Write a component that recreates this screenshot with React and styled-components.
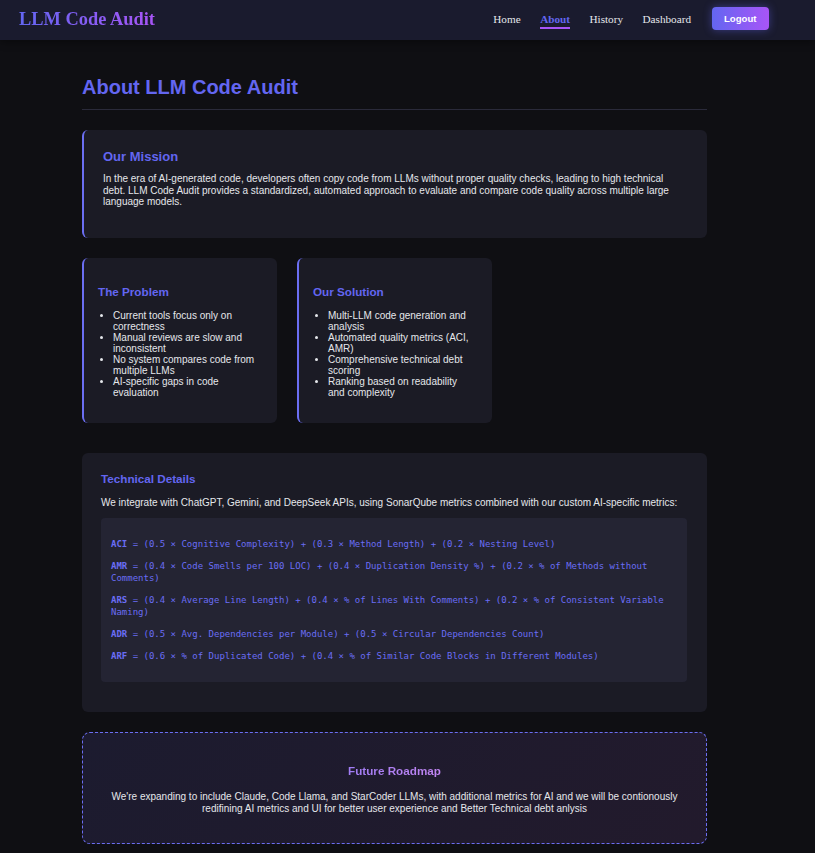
import React from 'react';
import styled, { createGlobalStyle } from 'styled-components';

const GlobalStyle = createGlobalStyle`
    body{
        margin:0;
        background:#0f0f13;
        font-family:"Liberation Sans", Arial, sans-serif;
        color:#e5e7eb;
    }
`

const Nav = styled.nav`
    height:40px;
    display:flex;
    align-items:center;
    justify-content:space-between;
    padding:0 46px 0 19px;
    background:#1a1b2e;
    box-shadow:0 2px 8px rgba(0,0,0,0.4);
`

const Logo = styled.div`
    font-family:"Liberation Serif", "Times New Roman", serif;
    font-weight:bold;
    font-size:18.4px;
    background:linear-gradient(90deg,#6366f1,#a855f7);
    -webkit-background-clip:text;
    background-clip:text;
    color:transparent;
    margin-top:-2px;
`

const NavLinks = styled.div`
    display:flex;
    align-items:center;
    gap:19.5px;
`

const NavLink = styled.a`
    position:relative;
    font-family:"Liberation Serif", "Times New Roman", serif;
    font-size:11.2px;
    color:${p => p.$active ? '#6366f1' : '#e5e7eb'};
    font-weight:${p => p.$active ? 'bold' : 'normal'};
    text-decoration:none;
    margin-top:-2px;

    &::after{
        content:'';
        display:${p => p.$active ? 'block' : 'none'};
        position:absolute;
        left:0;
        right:0;
        bottom:-4px;
        height:2px;
        background:#a855f7;
    }
`

const LogoutButton = styled.button`
    margin-left:1px;
    font-family:"Liberation Sans", Arial, sans-serif;
    font-weight:bold;
    font-size:9.6px;
    color:#fff;
    border:none;
    border-radius:4px;
    padding:6px 12.5px;
    height:23px;
    margin-top:-3px;
    background:linear-gradient(90deg,#6366f1,#a855f7);
    box-shadow:0 0 8px rgba(99,102,241,0.45);
`

const Main = styled.main`
    width:625px;
    margin:0 0 40px 82px;
`

const PageTitle = styled.h1`
    margin:36px 0 20px;
    padding-bottom:10px;
    font-size:20px;
    line-height:23px;
    color:#6366f1;
    border-bottom:1px solid #2a2a3a;
`

const Card = styled.section`
    background:#1b1b25;
    border-radius:6px;
    border-left:${p => p.$accent ? '2px solid #6b6ef2' : 'none'};
    padding:${p => p.$pad};
`

const CardTitle = styled.h3`
    margin:0 0 ${p => p.$gap || '10px'};
    font-size:${p => p.$size || '11.7px'};
    line-height:${p => p.$line || '13.5px'};
    color:#6366f1;
`

const Text = styled.p`
    margin:0 0 10px;
    font-size:10px;
    line-height:11.5px;
    color:#e5e7eb;
`

const Grid = styled.div`
    display:grid;
    grid-template-columns:repeat(3, 1fr);
    gap:20px;
    margin:20px 0 30px;
`

const List = styled.ul`
    margin:0;
    padding-left:15px;
    font-size:10px;
    line-height:11px;
    color:#e5e7eb;
`

const CodeBlock = styled.div`
    background:#242433;
    border-radius:4px;
    padding:10px 8px 10px 10px;
    margin-bottom:10px;
    font-family:"DejaVu Sans Mono", "Liberation Mono", monospace;
    font-size:9px;
    line-height:12px;
    color:#6a6df5;
`

const Formula = styled.p`
    margin:10px 0;
`

const Label = styled.b`
    font-weight:bold;
`

const Roadmap = styled.section`
    margin-top:20px;
    padding:28px 20px 28px;
    border:1px dashed #6b6ef2;
    border-radius:8px;
    background:linear-gradient(135deg,#1c1b2f,#221a2c);
    text-align:center;
`

const RoadmapTitle = styled.h3`
    margin:0 0 13.5px;
    font-size:11.7px;
    line-height:13.5px;
    display:inline-block;
    background:linear-gradient(90deg,#a07cf4,#c084f0);
    -webkit-background-clip:text;
    background-clip:text;
    color:transparent;
`

const RoadmapText = styled.p`
    margin:0;
    font-size:10px;
    line-height:12px;
    color:#e5e7eb;
`

const formulas = [
    ['ACI', '= (0.5 × Cognitive Complexity) + (0.3 × Method Length) + (0.2 × Nesting Level)'],
    ['AMR', '= (0.4 × Code Smells per 100 LOC) + (0.4 × Duplication Density %) + (0.2 × % of Methods without Comments)'],
    ['ARS', '= (0.4 × Average Line Length) + (0.4 × % of Lines With Comments) + (0.2 × % of Consistent Variable Naming)'],
    ['ADR', '= (0.5 × Avg. Dependencies per Module) + (0.5 × Circular Dependencies Count)'],
    ['ARF', '= (0.6 × % of Duplicated Code) + (0.4 × % of Similar Code Blocks in Different Modules)'],
]

const problems = [
    'Current tools focus only on correctness',
    'Manual reviews are slow and inconsistent',
    'No system compares code from multiple LLMs',
    'AI-specific gaps in code evaluation',
]

const solutions = [
    'Multi-LLM code generation and analysis',
    'Automated quality metrics (ACI, AMR)',
    'Comprehensive technical debt scoring',
    'Ranking based on readability and complexity',
]

export default function App(){
    return(
    <>
    <GlobalStyle />
    <Nav>
        <Logo>LLM Code Audit</Logo>
        <NavLinks>
            <NavLink href="#">Home</NavLink>
            <NavLink href="#" $active>About</NavLink>
            <NavLink href="#">History</NavLink>
            <NavLink href="#">Dashboard</NavLink>
            <LogoutButton>Logout</LogoutButton>
        </NavLinks>
    </Nav>

    <Main>
        <PageTitle>About LLM Code Audit</PageTitle>

        <Card $accent $pad="19px 20px 20px 19px">
            <CardTitle $size="13px" $line="15px" $gap="9px">Our Mission</CardTitle>
            <Text>
                In the era of AI-generated code, developers often copy code from LLMs without proper quality checks, leading to high technical debt. LLM Code Audit provides a standardized, automated approach to evaluate and compare code quality across multiple large language models.
            </Text>
        </Card>

        <Grid>
            <Card $accent $pad="27px 16px 25px 14px">
                <CardTitle $gap="12px">The Problem</CardTitle>
                <List>
                    {problems.map(p => <li key={p}>{p}</li>)}
                </List>
            </Card>
            <Card $accent $pad="27px 16px 25px 14px">
                <CardTitle $gap="12px">Our Solution</CardTitle>
                <List>
                    {solutions.map(s => <li key={s}>{s}</li>)}
                </List>
            </Card>
        </Grid>

        <Card $pad="19px 20px 20px 19px">
            <CardTitle $gap="11px">Technical Details</CardTitle>
            <Text>We integrate with ChatGPT, Gemini, and DeepSeek APIs, using SonarQube metrics combined with our custom AI-specific metrics:</Text>
            <CodeBlock>
                {formulas.map(([k, v]) => (
                    <Formula key={k}><Label>{k}</Label> {v}</Formula>
                ))}
            </CodeBlock>
        </Card>

        <Roadmap>
            <RoadmapTitle>Future Roadmap</RoadmapTitle>
            <RoadmapText>
                We're expanding to include Claude, Code Llama, and StarCoder LLMs, with additional metrics for AI and we will be contionously redifining AI metrics and UI for better user experience and Better Technical debt anlysis
            </RoadmapText>
        </Roadmap>
    </Main>
    </>
    )
}
